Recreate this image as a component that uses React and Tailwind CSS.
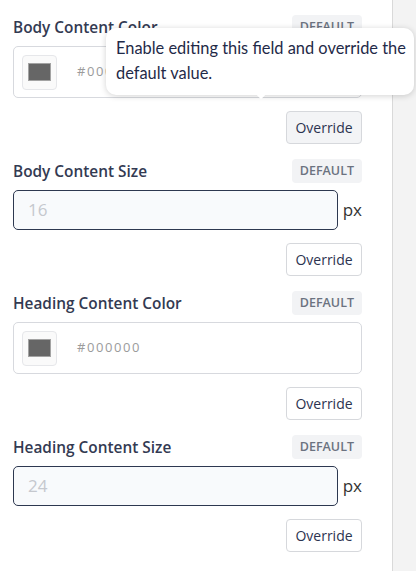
import React from "react";

const FIELDS = [
  { label: "Body Content Color", type: "color", value: "#000000", hovered: true },
  { label: "Body Content Size", type: "size", value: "16" },
  { label: "Heading Content Color", type: "color", value: "#000000" },
  { label: "Heading Content Size", type: "size", value: "24" },
];

export default function App() {
  return (
    <div
      className="relative flex w-[416px] h-[571px] overflow-hidden bg-white"
      style={{ fontFamily: '"Open Sans", sans-serif' }}
    >
      <div className="w-[392px] pl-[13px] pr-[30px] pt-[15px] flex flex-col gap-[15px]">
        {FIELDS.map((f) => (
          <Field key={f.label} {...f} />
        ))}
      </div>
      <div className="w-[24px] h-full bg-[#f3f3f3] border-l border-[#d9d9d9]" />

      {/* tooltip over the first field */}
      <div className="absolute left-[106px] top-[28px] w-[308px] h-[67px] bg-white rounded-[10px] shadow-[0_1px_6px_rgba(0,0,0,0.18)] pl-[10px] pr-[2px] pt-[7px]">
        <p
          className="text-[16.4px] leading-[25px] text-[#1f2a48]"
          style={{ fontFamily: "Lato, sans-serif" }}
        >
          Enable editing this field and override the default value.
        </p>
        <span className="absolute left-[152px] -bottom-[3px] w-[6px] h-[6px] bg-white rotate-45" />
      </div>
    </div>
  );
}

function Field({ label, type, value, hovered = false }) {
  return (
    <div className="flex flex-col">
      <div className="flex items-center justify-between h-6">
        <span className="text-[15.4px] font-semibold text-[#333a52] translate-y-[1px]">{label}</span>
        <span className="h-6 px-[8px] rounded-[4px] bg-[#f2f3f5] text-[12.5px] font-semibold text-[#6b7280] flex items-center">
          DEFAULT
        </span>
      </div>

      <div className="mt-[7px]">
        {type === "color" ? <ColorInput value={value} /> : <SizeInput value={value} />}
      </div>

      <div className="mt-[13px] flex justify-end">
        <button
          className={`w-[76px] h-[33px] border border-[#d6d8dc] rounded-[4px] text-[14px] font-medium text-[#2c3350] ${hovered ? "bg-[#f3f4f6]" : "bg-white"}`}
        >
          Override
        </button>
      </div>
    </div>
  );
}

function ColorInput({ value }) {
  return (
    <div className="h-[52px] border border-[#d7d9de] rounded-[5px] flex items-center pl-[8px]">
      <div className="w-[35px] h-[35px] border border-[#e6e7ea] bg-[#fafafa] rounded-[4px] flex items-center justify-center">
        <div className="w-[23px] h-[18px] bg-[#666666] border border-[#a3a3a3]" />
      </div>
      <span className="ml-[20px] text-[13px] tracking-[0.12em] text-[#9b9b9b]">{value}</span>
    </div>
  );
}

function SizeInput({ value }) {
  return (
    <div className="flex items-center">
      <div className="w-[326px] h-[40px] border border-[#2d3850] rounded-[5px] bg-[#f8fafc] pl-[14px] flex items-center text-[17px] text-[#c5c8ce]">
        {value}
      </div>
      <span className="ml-[5px] text-[17px] text-[#333]">px</span>
    </div>
  );
}
